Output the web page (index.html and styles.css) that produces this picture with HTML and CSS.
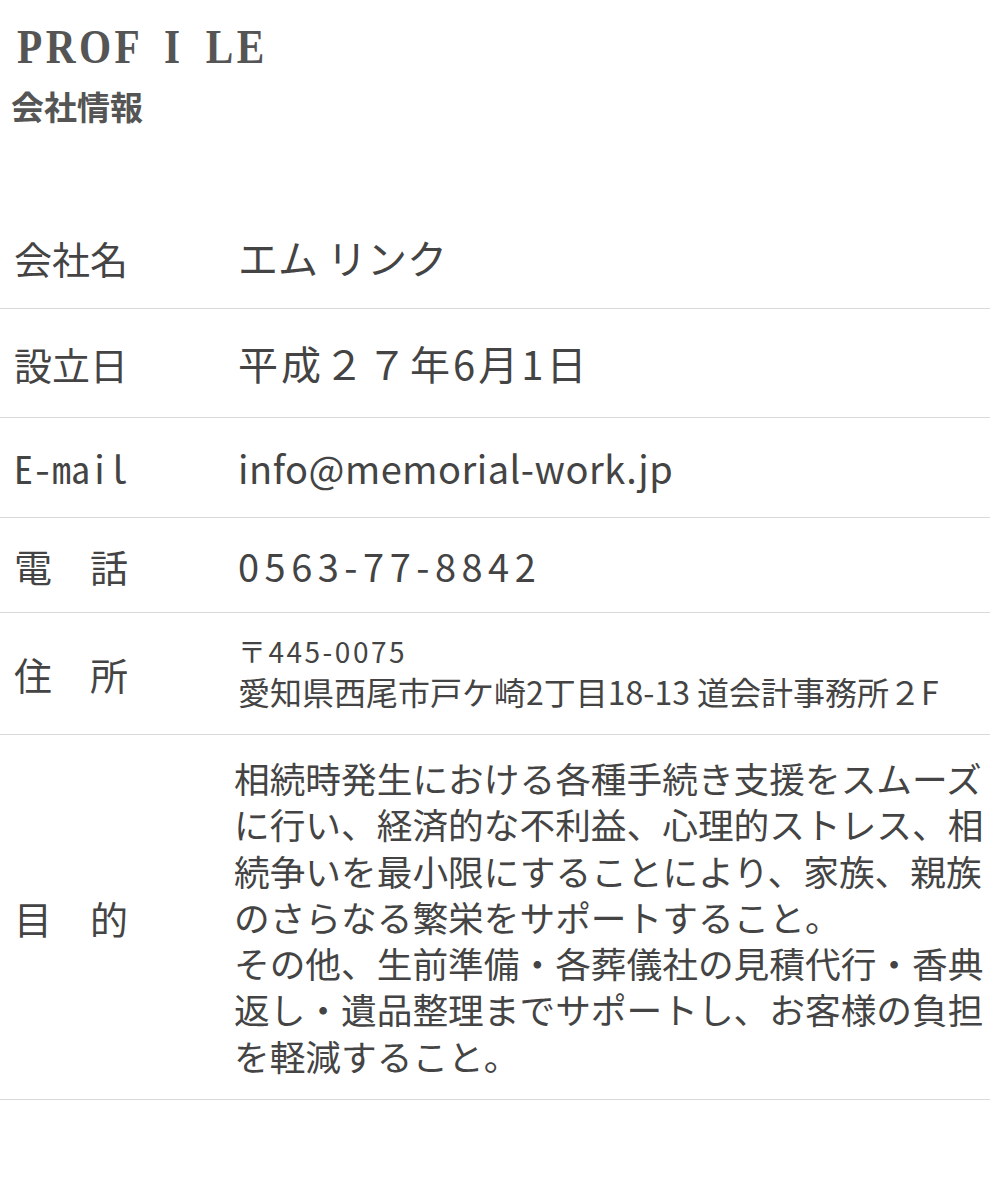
FILE: index.html
```html
<!DOCTYPE html>
<html lang="ja">
  <head>
    <meta charset="UTF-8" />
    <meta name="viewport" content="width=device-width, initial-scale=1.0" />
    <title>会社情報</title>
    <link rel="stylesheet" href="styles.css">
  </head>
  <body>
    <header class="page-head">
      <h1>PROF I LE</h1>
      <p class="sub">会社情報</p>
    </header>

    <div class="profile">
      <div class="row row-name">
        <div class="label">会社名</div>
        <div class="value">エム リンク</div>
      </div>
      <div class="row row-date">
        <div class="label">設立日</div>
        <div class="value date">平成２７年6月1日</div>
      </div>
      <div class="row row-mail">
        <div class="label mono">E-mail</div>
        <div class="value mail">info@memorial-work.jp</div>
      </div>
      <div class="row row-tel">
        <div class="label">電　話</div>
        <div class="value tel">0563-77-8842</div>
      </div>
      <div class="row row-addr">
        <div class="label">住　所</div>
        <div class="value addr">
          <span class="zip">〒445-0075</span>
          <span>愛知県西尾市戸ケ崎2丁目18-13 道会計事務所２F</span>
        </div>
      </div>
      <div class="row row-purpose">
        <div class="label">目　的</div>
        <div class="value purpose">
          相続時発生における各種手続き支援をスムーズに行い、経済的な不利益、心理的ストレス、相続争いを最小限にすることにより、家族、親族のさらなる繁栄をサポートすること。<br>
          その他、生前準備・各葬儀社の見積代行・香典返し・遺品整理までサポートし、お客様の負担を軽減すること。
        </div>
      </div>
    </div>
  </body>
</html>
```

FILE: styles.css
```css
body {
  margin: 0;
  background-color: #fff;
  color: #444;
  font-family: "Noto Sans CJK JP", "Noto Sans", sans-serif;
}

.page-head {
  padding: 23px 0 0 17px;
}

h1 {
  display: inline-block;
  margin: 0;
  font-family: "Liberation Serif", serif;
  font-size: 48px;
  line-height: 1;
  font-weight: 700;
  letter-spacing: 4px;
  word-spacing: 10px;
  color: #555;
  transform: scaleX(0.86);
  transform-origin: left center;
}

.sub {
  margin: 19px 0 0 -6px;
  font-size: 33px;
  line-height: 1;
  font-weight: 700;
  color: #555;
}

.profile {
  margin-top: 83px;
  margin-right: 10px;
}

.row {
  display: grid;
  grid-template-columns: 224px 1fr;
  align-items: center;
  padding: 21px 0 21px 14px;
  border-bottom: 1px solid #d9d9d9;
}

.row-name {
  padding: 23px 0 22px 14px;
}

.row-date {
  padding: 26px 0 25px 14px;
}

.row-tel {
  padding: 19px 0 18px 14px;
}

.row-purpose {
  padding: 20px 0 20px 14px;
}

.label {
  font-size: 38px;
  line-height: 57px;
  color: #444;
}

.mono {
  font-family: "Noto Sans Mono CJK JP", "Liberation Mono", monospace;
}

.value {
  font-size: 40px;
  line-height: 57px;
}

.date {
  letter-spacing: 3px;
}

.mail {
  font-size: 38px;
  letter-spacing: 0.5px;
}

.tel {
  font-size: 38px;
  letter-spacing: 5.5px;
}

.addr {
  display: flex;
  flex-direction: column;
  font-size: 32px;
  line-height: 44px;
}

.zip {
  font-size: 28px;
  line-height: 35px;
  letter-spacing: 2.5px;
}

.purpose {
  margin-left: -4px;
  font-size: 35.7px;
  line-height: 46.3px;
}
```
